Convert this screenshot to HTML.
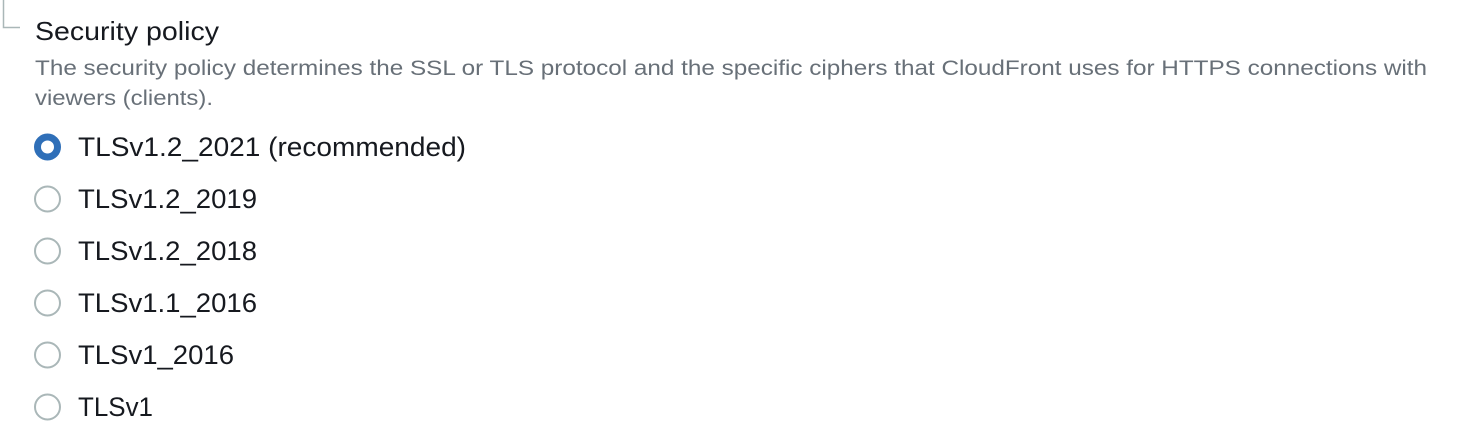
<!DOCTYPE html>
<html><head><meta charset="utf-8"><style>
html,body{margin:0;padding:0;background:#fff;width:1480px;height:446px;overflow:hidden}
svg{display:block}
text{font-family:"Liberation Sans",sans-serif}
</style></head><body>
<svg width="1480" height="446" viewBox="0 0 1480 446">
<path d="M3.5 0V27.5H20" fill="none" stroke="#aab7b8" stroke-width="1.5"/>
<text x="35" y="40" font-size="26" fill="#16191f" textLength="184" lengthAdjust="spacingAndGlyphs">Security policy</text>
<text x="35" y="75" font-size="21" fill="#687078" textLength="1392" lengthAdjust="spacingAndGlyphs">The security policy determines the SSL or TLS protocol and the specific ciphers that CloudFront uses for HTTPS connections with</text>
<text x="35" y="105" font-size="21" fill="#687078" textLength="178" lengthAdjust="spacingAndGlyphs">viewers (clients).</text>
<circle cx="47.5" cy="147" r="10" fill="none" stroke="#2f6fb8" stroke-width="7"/>
<circle cx="47.5" cy="199" r="12.5" fill="#fff" stroke="#aab7b8" stroke-width="2"/>
<circle cx="47.5" cy="251" r="12.5" fill="#fff" stroke="#aab7b8" stroke-width="2"/>
<circle cx="47.5" cy="303" r="12.5" fill="#fff" stroke="#aab7b8" stroke-width="2"/>
<circle cx="47.5" cy="355" r="12.5" fill="#fff" stroke="#aab7b8" stroke-width="2"/>
<circle cx="47.5" cy="407" r="12.5" fill="#fff" stroke="#aab7b8" stroke-width="2"/>
<g font-size="27" fill="#16191f">
<text x="78" y="156" textLength="388" lengthAdjust="spacingAndGlyphs">TLSv1.2_2021 (recommended)</text>
<text x="78" y="208" textLength="179" lengthAdjust="spacingAndGlyphs">TLSv1.2_2019</text>
<text x="78" y="260" textLength="179" lengthAdjust="spacingAndGlyphs">TLSv1.2_2018</text>
<text x="78" y="312" textLength="179" lengthAdjust="spacingAndGlyphs">TLSv1.1_2016</text>
<text x="78" y="364" textLength="156" lengthAdjust="spacingAndGlyphs">TLSv1_2016</text>
<text x="78" y="416" textLength="75" lengthAdjust="spacingAndGlyphs">TLSv1</text>
</g>
</svg>
</body></html>
